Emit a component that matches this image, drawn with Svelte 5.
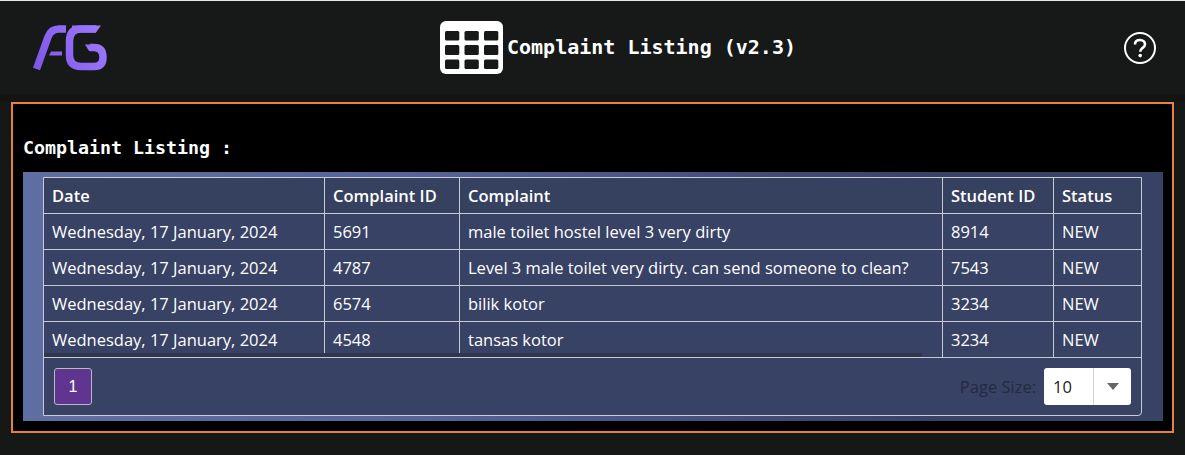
<script>
  const rows = [
    { date: 'Wednesday, 17 January, 2024', id: '5691', text: 'male toilet hostel level 3 very dirty', student: '8914', status: 'NEW' },
    { date: 'Wednesday, 17 January, 2024', id: '4787', text: 'Level 3 male toilet very dirty. can send someone to clean?', student: '7543', status: 'NEW' },
    { date: 'Wednesday, 17 January, 2024', id: '6574', text: 'bilik kotor', student: '3234', status: 'NEW' },
    { date: 'Wednesday, 17 January, 2024', id: '4548', text: 'tansas kotor', student: '3234', status: 'NEW' }
  ]
</script>

<div class="page">
  <header>
    <svg class="logo" viewBox="32 25 76 46" width="76" height="46">
      <defs>
        <linearGradient id="ag" gradientUnits="userSpaceOnUse" x1="33" y1="70" x2="105" y2="25">
          <stop offset="0" stop-color="#7a56e6" />
          <stop offset="1" stop-color="#a07aff" />
        </linearGradient>
      </defs>
      <g fill="none" stroke="url(#ag)" stroke-width="7.500">
        <path d="M36.500 69 L48 37 Q51 29 59 29 L66 29" />
        <path d="M96 29 L81 29 Q69.500 29 69.500 41 L69.500 55 Q69.500 66.500 81 66.500 L94 66.500 Q103 66.500 103 57.500 Q103 47.500 94 47.500 L90 47.500" />
      </g>
      <path d="M51 51.500 L62 51.500 L62 55.500 L49 55.500 Z M72 25.500 L101 25.500 L96 32.500 L72 32.500 Z M85 44.500 L92 44.500 L95 51 L89 51 Z" fill="url(#ag)" />
    </svg>
    <div class="title">
      <svg class="grid-icon" viewBox="0 0 63 53" width="63" height="53">
        <rect width="63" height="53" rx="6" fill="#fff" />
        {#each [[10, 9.500], [24, 10], [38.500, 9.500]] as [y, h]}
          {#each [5, 24.500, 44] as x}
            <rect {x} {y} width="14.300" height={h} rx="1.500" fill="#171918" />
          {/each}
        {/each}
      </svg>
      <span>Complaint Listing (v2.3)</span>
    </div>
    <svg class="help" viewBox="0 0 32 32" width="32" height="32">
      <circle cx="16" cy="16" r="15" fill="none" stroke="#fff" stroke-width="2" />
      <path d="M11 12.500 C11 9.500 13.200 8 16 8 C19 8 21 9.800 21 12.200 C21 14.400 19.600 15.300 18.200 16.300 C16.800 17.300 16.200 18 16.200 19.800" fill="none" stroke="#fff" stroke-width="2.600" />
      <circle cx="16.200" cy="23.600" r="1.800" fill="#fff" />
    </svg>
  </header>

  <main>
    <h2>Complaint Listing :</h2>
    <div class="panel">
      <div class="grid">
        <div class="row head">
          <div class="cell date">Date</div>
          <div class="cell cid">Complaint ID</div>
          <div class="cell text">Complaint</div>
          <div class="cell sid">Student ID</div>
          <div class="cell status">Status</div>
        </div>
        <div class="body">
          {#each rows as r}
            <div class="row">
              <div class="cell date">{r.date}</div>
              <div class="cell cid">{r.id}</div>
              <div class="cell text">{r.text}</div>
              <div class="cell sid">{r.student}</div>
              <div class="cell status">{r.status}</div>
            </div>
          {/each}
          <div class="scrollbar"></div>
        </div>
        <div class="footer">
          <button class="page-btn">1</button>
          <div class="size">
            <span>Page Size:</span>
            <div class="select">
              <span class="value">10</span>
              <span class="arrow"><i></i></span>
            </div>
          </div>
        </div>
      </div>
    </div>
  </main>
</div>

<style>
  :global(body) {
    margin: 0;
    background: #161817;
  }
  .page {
    width: 1185px;
    height: 455px;
    overflow: hidden;
    background: #161817;
    font-family: "Open Sans", "Noto Sans", sans-serif;
    color: #fff;
  }
  header {
    height: 93px;
    border-top: 1px solid #e8e8e8;
    border-bottom: 8px solid #131514;
    display: flex;
    align-items: center;
    justify-content: space-between;
    padding: 0 29px 0 32px;
    background: #171918;
  }
  .logo {
    filter: blur(0.4px);
  }
  .title {
    display: flex;
    align-items: center;
    gap: 4px;
    margin-left: 4px;
    font: bold 20px "DejaVu Sans Mono", monospace;
  }
  .title span {
    padding-bottom: 2px;
  }
  .grid-icon {
    display: block;
  }
  main {
    margin: 0 11px;
    width: 1163px;
    height: 331px;
    box-sizing: border-box;
    border: 2px solid #e8813f;
    background: #000;
    padding: 0 9px 0 10px;
  }
  h2 {
    margin: 0;
    height: 68px;
    padding-top: 33px;
    box-sizing: border-box;
    font: bold 18.300px/22px "DejaVu Sans Mono", monospace;
    color: #fff;
  }
  .panel {
    height: 249px;
    box-sizing: border-box;
    padding: 5px 21px 5px 20px;
    background: linear-gradient(90deg, #5f6fa3 0, #55639a 35%, #384265 80%);
  }
  .grid {
    height: 239px;
    box-sizing: border-box;
    border: 1px solid #c9cbd4;
    border-radius: 0 0 4px 0;
    background: #384265;
    display: flex;
    flex-direction: column;
    font-size: 16.500px;
  }
  .row {
    display: flex;
    height: 36px;
    box-sizing: border-box;
    border-bottom: 1px solid #c9cbd4;
    line-height: 35px;
  }
  .head {
    font-weight: 600;
    background: #36405f;
    color: #fff;
  }
  .cell {
    padding: 0 8px;
    box-sizing: border-box;
    border-right: 1px solid #c9cbd4;
    white-space: nowrap;
    overflow: hidden;
  }
  .date { width: 281px; }
  .cid { width: 135px; }
  .text { width: 483px; }
  .sid { width: 111px; }
  .status { flex: 1; border-right: 0; }
  .body {
    height: 144px;
    position: relative;
    overflow: hidden;
  }
  .scrollbar {
    position: absolute;
    left: 0;
    bottom: 1px;
    width: 878px;
    height: 4px;
    background: #2f3650;
  }
  .footer {
    flex: 1;
    display: flex;
    align-items: center;
    justify-content: space-between;
    padding: 0 10px;
  }
  .page-btn {
    width: 38px;
    height: 37px;
    margin: 0;
    padding: 0;
    border: 1px solid #b9bac4;
    border-radius: 3px;
    background: #5f358f;
    color: #fff;
    font: 16px "Liberation Sans", sans-serif;
  }
  .size {
    display: flex;
    align-items: center;
    gap: 8px;
    color: #242a40;
    font-size: 16.500px;
  }
  .select {
    display: flex;
    width: 87px;
    height: 37px;
    background: #fff;
    border-radius: 3px;
    color: #222;
    line-height: 37px;
  }
  .value {
    width: 50px;
    padding-left: 9px;
    box-sizing: border-box;
    border-right: 1px solid #d4d4d4;
  }
  .arrow {
    flex: 1;
    display: flex;
    align-items: center;
    justify-content: center;
  }
  .arrow i {
    width: 0;
    height: 0;
    border-left: 6.500px solid transparent;
    border-right: 6.500px solid transparent;
    border-top: 7px solid #666;
  }
</style>
